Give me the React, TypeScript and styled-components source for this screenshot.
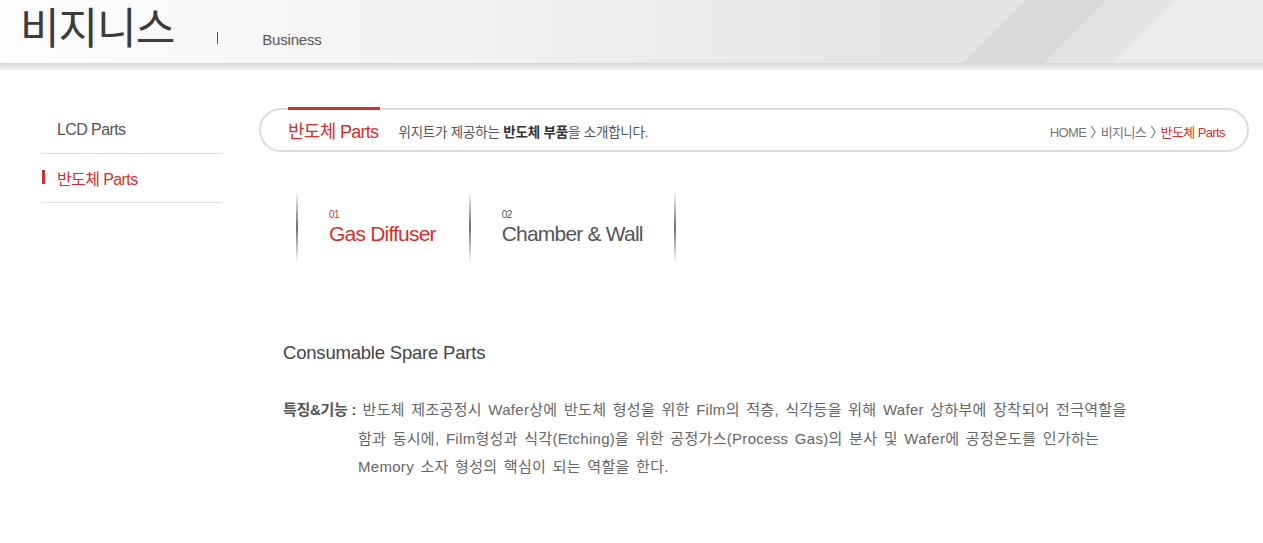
import styled, { createGlobalStyle } from "styled-components";

const GlobalStyle = createGlobalStyle`
	html, body {
		margin: 0;
		padding: 0;
		background: #fff;
	}
	body {
		font-family: "Liberation Sans", "Noto Sans CJK KR", sans-serif;
		color: #555;
	}
	* {
		box-sizing: border-box;
	}
`;

const RED = "#d0312d";

/* HEADER */

const Header = styled.header`
	height: 70px;
	background:
		linear-gradient(to bottom, transparent 63px, #d6d6d6 63px, #f4f4f4 70px),
		linear-gradient(135deg, transparent 725px, #d9d9d9 726px, #d9d9d9 782px, #e4e4e4 783px, #e4e4e4 830px, #ebebeb 831px),
		linear-gradient(to right, #fdfdfd 0%, #f3f3f3 35%, #e5e5e5 70%, #e2e2e2 100%);
	display: flex;
	align-items: flex-start;
	padding-left: 20px;
`;

const PageTitle = styled.h1`
	margin: 0;
	font-family: "Noto Sans CJK KR", sans-serif;
	font-weight: 400;
	font-size: 43px;
	line-height: 50px;
	letter-spacing: -1px;
	color: #3c3c3c;
`;

const TitleBar = styled.span`
	width: 1px;
	height: 12px;
	background: #555;
	margin: 32px 0 0 43px;
`;

const SubTitle = styled.span`
	font-size: 15px;
	color: #555;
	margin: 32px 0 0 44px;
	line-height: 16px;
	letter-spacing: -0.2px;
`;

/* BODY */

const Body = styled.div`
	display: flex;
	padding: 35px 0 0 41px;
	gap: 37px;
`;

const Side = styled.nav`
	width: 181px;
	flex-shrink: 0;
`;

const SideItem = styled.div<{ $active?: boolean }>`
	position: relative;
	height: 49px;
	border-bottom: 1px solid #e2e2e2;
	display: flex;
	align-items: center;
	padding-left: 16px;
	padding-top: ${(p) => (p.$active ? "0" : "1px")};
	font-size: 16px;
	letter-spacing: -0.6px;
	color: ${(p) => (p.$active ? RED : "#555")};

	&::before {
		content: "";
		display: ${(p) => (p.$active ? "block" : "none")};
		position: absolute;
		left: 1px;
		top: 16px;
		width: 3px;
		height: 14px;
		background: ${RED};
	}
`;

const Main = styled.main`
	width: 990px;
`;

const TopBar = styled.div`
	margin-top: 3px;
	height: 44px;
	border: 2px solid #dcdcdc;
	border-radius: 22px;
	display: flex;
	align-items: center;
	padding: 0 22px 0 27px;
`;

const BarTitle = styled.div`
	position: relative;
	font-size: 18px;
	letter-spacing: -0.7px;
	color: ${RED};
	align-self: stretch;
	display: flex;
	align-items: center;
	padding-bottom: 1px;

	&::before {
		content: "";
		position: absolute;
		left: 0;
		right: -2px;
		top: -3px;
		height: 3px;
		background: ${RED};
	}
`;

const BarDesc = styled.div`
	margin-left: 20px;
	font-size: 13.5px;
	letter-spacing: -0.2px;
	color: #555;
	padding-top: 2px;

	b {
		color: #333;
	}
`;

const Crumbs = styled.div`
	margin-left: auto;
	font-size: 13px;
	letter-spacing: -0.6px;
	color: #777;
	padding-top: 2px;

	em {
		font-style: normal;
		color: ${RED};
	}
`;

const Sep = styled.span`
	display: inline-block;
	margin: 0 -2px 0 4px;
	color: #666;
`;

const Tabs = styled.div`
	display: flex;
	margin: 39px 0 0 37px;
	height: 72px;
`;

const Tab = styled.div<{ $active?: boolean; $last?: boolean }>`
	position: relative;
	padding: 18px 33px 0 33px;
	color: ${(p) => (p.$active ? RED : "#555")};

	&::before,
	&::after {
		content: "";
		position: absolute;
		top: 0;
		bottom: 0;
		width: 2px;
		background: linear-gradient(to bottom, rgba(110, 110, 110, 0) 0%, #6e6e6e 50%, rgba(110, 110, 110, 0) 100%);
	}
	&::before {
		left: 0;
	}
	&::after {
		display: ${(p) => (p.$last ? "block" : "none")};
		right: 0;
	}
`;

const TabNum = styled.div`
	font-size: 10px;
	line-height: 12px;
	letter-spacing: -0.5px;
`;

const TabName = styled.div`
	font-size: 21px;
	line-height: 26px;
	letter-spacing: -0.8px;
`;

const Section = styled.div`
	margin: 79px 0 0 24px;
`;

const SectionTitle = styled.h2`
	margin: 0;
	font-weight: 400;
	font-size: 18.5px;
	letter-spacing: -0.2px;
	color: #444;
`;

const Feature = styled.p`
	margin: 32px 0 0;
	padding-left: 75px;
	text-indent: -75px;
	font-size: 15px;
	line-height: 28.5px;
	letter-spacing: 0.3px;
	word-spacing: 2px;
	color: #666;
	white-space: nowrap;
`;

const FeatureLabel = styled.b`
	font-weight: 700;
	color: #555;
	letter-spacing: -0.3px;
	word-spacing: 0;
`;

export default function App() {
	return (
		<>
			<GlobalStyle />
			<Header>
				<PageTitle>비지니스</PageTitle>
				<TitleBar />
				<SubTitle>Business</SubTitle>
			</Header>
			<Body>
				<Side>
					<SideItem>LCD Parts</SideItem>
					<SideItem $active>반도체 Parts</SideItem>
				</Side>
				<Main>
					<TopBar>
						<BarTitle>반도체 Parts</BarTitle>
						<BarDesc>
							위지트가 제공하는 <b>반도체 부품</b>을 소개합니다.
						</BarDesc>
						<Crumbs>
							HOME<Sep>〉</Sep>비지니스<Sep>〉</Sep><em>반도체 Parts</em>
						</Crumbs>
					</TopBar>
					<Tabs>
						<Tab $active>
							<TabNum>01</TabNum>
							<TabName>Gas Diffuser</TabName>
						</Tab>
						<Tab $last>
							<TabNum>02</TabNum>
							<TabName>Chamber &amp; Wall</TabName>
						</Tab>
					</Tabs>
					<Section>
						<SectionTitle>Consumable Spare Parts</SectionTitle>
						<Feature>
							<FeatureLabel>특징&amp;기능 :</FeatureLabel> 반도체 제조공정시 Wafer상에 반도체 형성을 위한 Film의 적층, 식각등을 위해 Wafer 상하부에 장착되어 전극역할을
							<br />
							함과 동시에, Film형성과 식각(Etching)을 위한 공정가스(Process Gas)의 분사 및 Wafer에 공정온도를 인가하는
							<br />
							Memory 소자 형성의 핵심이 되는 역할을 한다.
						</Feature>
					</Section>
				</Main>
			</Body>
		</>
	);
}
